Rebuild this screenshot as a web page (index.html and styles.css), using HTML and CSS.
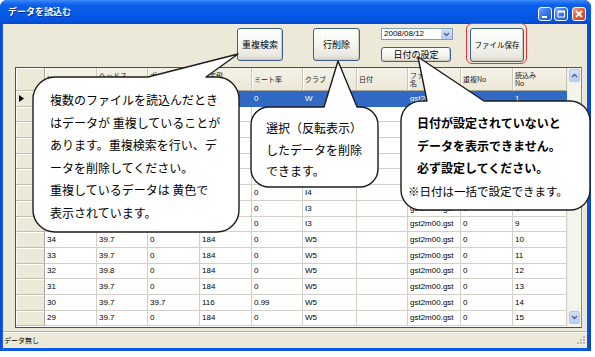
FILE: index.html
```html
<!DOCTYPE html>
<html lang="ja">
<head>
<meta charset="utf-8">
<title>データを読込む</title>
<link rel="stylesheet" href="styles.css">
</head>
<body>
<div class="window">
  <div class="titlebar">
    <span class="title">データを読込む</span>
    <div class="tbtns">
      <span class="tb"><svg width="12" height="12" viewBox="0 0 12 12"><rect x="3" y="8" width="5" height="2" fill="#fff"/></svg></span>
      <span class="tb"><svg width="12" height="12" viewBox="0 0 12 12"><rect x="3" y="3" width="6.5" height="6" fill="none" stroke="#fff" stroke-width="1"/><rect x="3" y="3" width="6.5" height="1.6" fill="#fff"/></svg></span>
      <span class="tb close"><svg width="12" height="12" viewBox="0 0 12 12"><path d="M3 3 L9 9 M9 3 L3 9" stroke="#fff" stroke-width="1.8"/></svg></span>
    </div>
  </div>
  <div class="client">
    <div class="toolbar">
      <button class="btn b-dup">重複検索</button>
      <button class="btn b-del">行削除</button>
      <div class="dategroup">
        <div class="combo"><span class="cval">2008/08/12</span><span class="drop"><svg width="7" height="5" viewBox="0 0 7 5"><path d="M1 1 L3.5 3.5 L6 1" fill="none" stroke="#4D6185" stroke-width="1.4"/></svg></span></div>
        <button class="btn b-date">日付の設定</button>
      </div>
      <div class="savewrap"><button class="btn b-save">ファイル保存</button><span class="mark"></span></div>
    </div>
    <div class="grid">
      <div class="gmain">
        <div class="grow ghead">
          <div class="cell rh"></div>
          <div class="cell hc">No</div>
          <div class="cell hc">ヘッドス<br>ピード</div>
          <div class="cell hc">ボール<br>初速</div>
          <div class="cell hc">推定飛<br>距離</div>
          <div class="cell hc">ミート率</div>
          <div class="cell hc">クラブ</div>
          <div class="cell hc">日付</div>
          <div class="cell hc">ファイル<br>名</div>
          <div class="cell hc">重複No</div>
          <div class="cell hc">読込み<br>No</div>
        </div>
        <div class="grow sel"><div class="cell rh"><svg width="5" height="7" viewBox="0 0 5 7"><path d="M0 0 L5 3.5 L0 7 Z" fill="#000"/></svg></div><div class="cell">43</div><div class="cell">39.7</div><div class="cell">0</div><div class="cell">184</div><div class="cell">0</div><div class="cell">W</div><div class="cell"></div><div class="cell">gst2m00.gst</div><div class="cell">0</div><div class="cell">1</div></div>
        <div class="grow"><div class="cell rh"></div><div class="cell">42</div><div class="cell">39.7</div><div class="cell">0</div><div class="cell">184</div><div class="cell">0</div><div class="cell">W</div><div class="cell"></div><div class="cell">gst2m00.gst</div><div class="cell">0</div><div class="cell">2</div></div>
        <div class="grow"><div class="cell rh"></div><div class="cell">41</div><div class="cell">39.8</div><div class="cell">0</div><div class="cell">184</div><div class="cell">0</div><div class="cell">W</div><div class="cell"></div><div class="cell">gst2m00.gst</div><div class="cell">0</div><div class="cell">3</div></div>
        <div class="grow"><div class="cell rh"></div><div class="cell">40</div><div class="cell">39.7</div><div class="cell">0</div><div class="cell">184</div><div class="cell">0</div><div class="cell">W</div><div class="cell"></div><div class="cell">gst2m00.gst</div><div class="cell">0</div><div class="cell">4</div></div>
        <div class="grow"><div class="cell rh"></div><div class="cell">39</div><div class="cell">39.7</div><div class="cell">0</div><div class="cell">184</div><div class="cell">0</div><div class="cell">I5</div><div class="cell"></div><div class="cell">gst2m00.gst</div><div class="cell">0</div><div class="cell">5</div></div>
        <div class="grow"><div class="cell rh"></div><div class="cell">38</div><div class="cell">39.7</div><div class="cell">0</div><div class="cell">184</div><div class="cell">0</div><div class="cell">I4</div><div class="cell"></div><div class="cell">gst2m00.gst</div><div class="cell">0</div><div class="cell">6</div></div>
        <div class="grow"><div class="cell rh"></div><div class="cell">37</div><div class="cell">39.7</div><div class="cell">0</div><div class="cell">184</div><div class="cell">0</div><div class="cell">I4</div><div class="cell"></div><div class="cell">gst2m00.gst</div><div class="cell">0</div><div class="cell">7</div></div>
        <div class="grow"><div class="cell rh"></div><div class="cell">36</div><div class="cell">39.7</div><div class="cell">0</div><div class="cell">184</div><div class="cell">0</div><div class="cell">I3</div><div class="cell"></div><div class="cell">gst2m00.gst</div><div class="cell">0</div><div class="cell">8</div></div>
        <div class="grow"><div class="cell rh"></div><div class="cell">35</div><div class="cell">39.7</div><div class="cell">0</div><div class="cell">184</div><div class="cell">0</div><div class="cell">I3</div><div class="cell"></div><div class="cell">gst2m00.gst</div><div class="cell">0</div><div class="cell">9</div></div>
        <div class="grow"><div class="cell rh"></div><div class="cell">34</div><div class="cell">39.7</div><div class="cell">0</div><div class="cell">184</div><div class="cell">0</div><div class="cell">W5</div><div class="cell"></div><div class="cell">gst2m00.gst</div><div class="cell">0</div><div class="cell">10</div></div>
        <div class="grow"><div class="cell rh"></div><div class="cell">33</div><div class="cell">39.7</div><div class="cell">0</div><div class="cell">184</div><div class="cell">0</div><div class="cell">W5</div><div class="cell"></div><div class="cell">gst2m00.gst</div><div class="cell">0</div><div class="cell">11</div></div>
        <div class="grow"><div class="cell rh"></div><div class="cell">32</div><div class="cell">39.8</div><div class="cell">0</div><div class="cell">184</div><div class="cell">0</div><div class="cell">W5</div><div class="cell"></div><div class="cell">gst2m00.gst</div><div class="cell">0</div><div class="cell">12</div></div>
        <div class="grow"><div class="cell rh"></div><div class="cell">31</div><div class="cell">39.7</div><div class="cell">0</div><div class="cell">184</div><div class="cell">0</div><div class="cell">W5</div><div class="cell"></div><div class="cell">gst2m00.gst</div><div class="cell">0</div><div class="cell">13</div></div>
        <div class="grow"><div class="cell rh"></div><div class="cell">30</div><div class="cell">39.7</div><div class="cell">39.7</div><div class="cell">116</div><div class="cell">0.99</div><div class="cell">W5</div><div class="cell"></div><div class="cell">gst2m00.gst</div><div class="cell">0</div><div class="cell">14</div></div>
        <div class="grow"><div class="cell rh"></div><div class="cell">29</div><div class="cell">39.7</div><div class="cell">0</div><div class="cell">184</div><div class="cell">0</div><div class="cell">W5</div><div class="cell"></div><div class="cell">gst2m00.gst</div><div class="cell">0</div><div class="cell">15</div></div>
      </div>
      <div class="vscroll">
        <span class="sb"><svg width="7" height="5" viewBox="0 0 7 5"><path d="M1 4 L3.5 1.5 L6 4" fill="none" stroke="#4D6185" stroke-width="1.4"/></svg></span>
        <span class="sb"><svg width="7" height="5" viewBox="0 0 7 5"><path d="M1 1 L3.5 3.5 L6 1" fill="none" stroke="#4D6185" stroke-width="1.4"/></svg></span>
      </div>
    </div>
    <div class="status">
      <span class="stext">データ無し</span>
      <svg class="grip" width="11" height="11" viewBox="0 0 11 11">
        <g fill="#fff"><rect x="9" y="1" width="2" height="2"/><rect x="6" y="4" width="2" height="2"/><rect x="9" y="4" width="2" height="2"/><rect x="3" y="7" width="2" height="2"/><rect x="6" y="7" width="2" height="2"/><rect x="9" y="7" width="2" height="2"/></g>
        <g fill="#B9B6A5"><rect x="8" y="0" width="2" height="2"/><rect x="5" y="3" width="2" height="2"/><rect x="8" y="3" width="2" height="2"/><rect x="2" y="6" width="2" height="2"/><rect x="5" y="6" width="2" height="2"/><rect x="8" y="6" width="2" height="2"/></g>
      </svg>
    </div>
  </div>

  <div class="callout c1">
    <svg class="shape" width="206" height="155" viewBox="0 0 206 155"><path d="M22,0 H115 L205,-23 L173,0 H184 A22,22 0 0 1 206,22 V133 A22,22 0 0 1 184,155 H22 A22,22 0 0 1 0,133 V22 A22,22 0 0 1 22,0 Z"/></svg>
    <div class="txt">複数のファイルを読込んだとき<br>はデータが 重複していることが<br>あります。重複検索を行い、デ<br>ータを削除してください。<br>重複しているデータは 黄色で<br>表示されています。</div>
  </div>
  <div class="callout c2">
    <svg class="shape" width="127" height="80" viewBox="0 0 127 80"><path d="M18,0 H73 L87,-46 L106,0 H109 A18,18 0 0 1 127,18 V62 A18,18 0 0 1 109,80 H18 A18,18 0 0 1 0,62 V18 A18,18 0 0 1 18,0 Z"/></svg>
    <div class="txt">選択（反転表示）<br>したデータを削除<br>できます。</div>
  </div>
  <div class="callout c3">
    <svg class="shape" width="189" height="109" viewBox="0 0 189 109"><path d="M20,0 H26 L17,-44 L83,0 H169 A20,20 0 0 1 189,20 V89 A20,20 0 0 1 169,109 H20 A20,20 0 0 1 0,89 V20 A20,20 0 0 1 20,0 Z"/></svg>
    <div class="txt"><b>日付が設定されていないと<br>データを表示できません。<br>必ず設定してください。</b><br><span class="note">※日付は一括で設定できます。</span></div>
  </div>
</div>
</body>
</html>
```

FILE: styles.css
```css
* { box-sizing: border-box; }
body {
  margin: 0;
  background: #fff;
  font-family: "Noto Sans CJK JP", "Liberation Sans", sans-serif;
}
.window {
  position: relative;
  width: 591px;
  height: 351px;
  display: flex;
  flex-direction: column;
  background: linear-gradient(90deg, #0642C8 0, #1866EE 3px, #0A5AE6 4px, #0A5AE6 586px, #0643C9 591px);
  border-radius: 7px 7px 0 0;
}
.titlebar {
  height: 24px;
  display: flex;
  align-items: flex-start;
  border-radius: 7px 7px 0 0;
  background: linear-gradient(180deg, #3E8DF8 0%, #2576F3 8%, #0C5EE8 22%, #0559E6 55%, #0555E0 85%, #0447CC 100%);
}
.title {
  margin: 6px 0 0 8px;
  color: #fff;
  font-weight: bold;
  font-size: 9px;
  line-height: 12px;
  text-shadow: 1px 1px 0 #0B2C9C;
}
.tbtns {
  margin: 7px 5px 0 auto;
  display: flex;
  gap: 2px;
}
.tb {
  width: 14px;
  height: 14px;
  border: 1px solid #fff;
  border-radius: 3px;
  background: linear-gradient(135deg, #74A9FF 0%, #3A78EE 45%, #1E57D8 100%);
  display: flex;
  align-items: center;
  justify-content: center;
}
.tb.close {
  margin-left: 2px;
  background: linear-gradient(135deg, #F2A58A 0%, #E1603A 45%, #C8401C 100%);
}
.client {
  flex: 1;
  margin: 0 4px 3px 3px;
  background: #ECE9D8;
  display: flex;
  flex-direction: column;
}
.toolbar {
  height: 43px;
  display: flex;
  align-items: flex-start;
  padding: 4px 0 0 234px;
}
.btn {
  margin: 0;
  padding: 0;
  border: 1px solid #3F5F8C;
  border-radius: 3px;
  background: linear-gradient(180deg, #FFFFFF 0%, #F6F6F2 45%, #EAE8E0 85%, #D8D3C7 100%);
  font-family: "Noto Sans CJK JP", sans-serif;
  font-size: 9px;
  line-height: 10px;
  color: #000;
  box-shadow: inset -1px -1px 0 #CFCBBF;
}
.b-dup { width: 46px; height: 33px; }
.b-del { margin-left: 30px; width: 47px; height: 33px; }
.dategroup {
  margin-left: 21px;
  width: 72px;
  display: flex;
  flex-direction: column;
  gap: 7px;
}
.combo {
  height: 12px;
  background: #fff;
  border: 1px solid #7F9DB9;
  display: flex;
  align-items: center;
}
.cval {
  flex: 1;
  padding-left: 2px;
  font-family: "Liberation Sans", sans-serif;
  font-size: 8px;
  line-height: 10px;
}
.drop {
  width: 11px;
  height: 10px;
  background: linear-gradient(180deg, #D4E0FC, #B7CBF6);
  border-radius: 1px;
  display: flex;
  align-items: center;
  justify-content: center;
}
.b-date { height: 15px; width: 70px; font-size: 9px; }
.savewrap {
  margin-left: 17px;
  position: relative;
}
.b-save { width: 54px; height: 34px; font-size: 7.5px; }
.mark {
  position: absolute;
  left: -4px;
  top: -5px;
  right: -3px;
  bottom: -2px;
  border: 1px solid #E5323B;
  border-radius: 6px;
}
.grid {
  margin: 0 5px 0 12px;
  height: 261px;
  border: 1px solid #4E4E4E;
  border-right-color: #8A8A8A;
  display: flex;
  background: #fff;
}
.gmain {
  width: 551px;
  overflow: hidden;
}
.grow {
  display: grid;
  grid-template-columns: 29px 52px 51px 52px 52px 51px 54px 51px 53px 52px 54px;
  height: 15.7px;
}
.grow.ghead { height: 23px; }
.cell {
  border-right: 1px solid #D4D0C8;
  border-bottom: 1px solid #D4D0C8;
  padding-left: 2px;
  display: flex;
  align-items: center;
  white-space: nowrap;
  overflow: hidden;
  font-family: "Liberation Sans", sans-serif;
  font-size: 8px;
  color: #000;
}
.rh {
  background: #ECE9D8;
  border-right: 1px solid #ACA899;
  border-bottom: 1px solid #C2BFAE;
  box-shadow: inset 1px 1px 0 #fff;
  padding-left: 3px;
}
.hc {
  background: linear-gradient(180deg, #F4F2E8, #EBE8D7);
  border-right: 1px solid #C9C6B5;
  border-bottom: 1px solid #ACA899;
  box-shadow: inset 1px 0 0 #fff;
  font-family: "Noto Sans CJK JP", sans-serif;
  font-size: 7px;
  line-height: 8px;
  color: #222;
}
.sel .cell:not(.rh) {
  background: #316AC5;
  color: #fff;
  border-color: #316AC5;
}
.vscroll {
  width: 14px;
  background: #F5F4EC;
  border-left: 1px solid #EEEDE5;
  display: flex;
  flex-direction: column;
  justify-content: space-between;
  padding: 1px 0 3px;
}
.sb {
  height: 13px;
  margin: 0 1px;
  border: 1px solid #B5C8F2;
  border-radius: 2px;
  background: linear-gradient(180deg, #D6E2FD, #B9CCF7);
  display: flex;
  align-items: center;
  justify-content: center;
}
.status {
  margin-top: 3px;
  height: 17px;
  border-top: 1px solid #B5B2A3;
  box-shadow: inset 0 1px 0 #fff;
  display: flex;
  align-items: center;
  justify-content: space-between;
  padding: 0 1px 0 1px;
}
.stext {
  font-size: 7px;
  line-height: 9px;
  color: #000;
}
.grip { align-self: flex-end; margin-bottom: 1px; }
.callout {
  position: absolute;
}
.callout .shape {
  position: absolute;
  left: 0;
  top: 0;
  overflow: visible;
}
.callout .shape path {
  fill: #fff;
  stroke: #1C1C1C;
  stroke-width: 1.4;
  stroke-linejoin: round;
}
.callout .txt {
  position: relative;
  white-space: nowrap;
  font-family: "Noto Sans CJK JP", sans-serif;
  font-size: 12px;
  color: #000;
}
.c1 { left: 33px; top: 77px; width: 206px; height: 155px; }
.c1 .txt { padding: 12px 0 0 17px; line-height: 22.6px; }
.c2 { left: 251px; top: 107px; width: 127px; height: 80px; }
.c2 .txt { padding: 10px 0 0 15px; line-height: 21.5px; }
.c3 { left: 401px; top: 101px; width: 189px; height: 109px; }
.c3 .txt { padding: 11px 0 0 16px; line-height: 22.5px; }
.c3 .note { margin-left: -9px; font-size: 11.5px; }
```
